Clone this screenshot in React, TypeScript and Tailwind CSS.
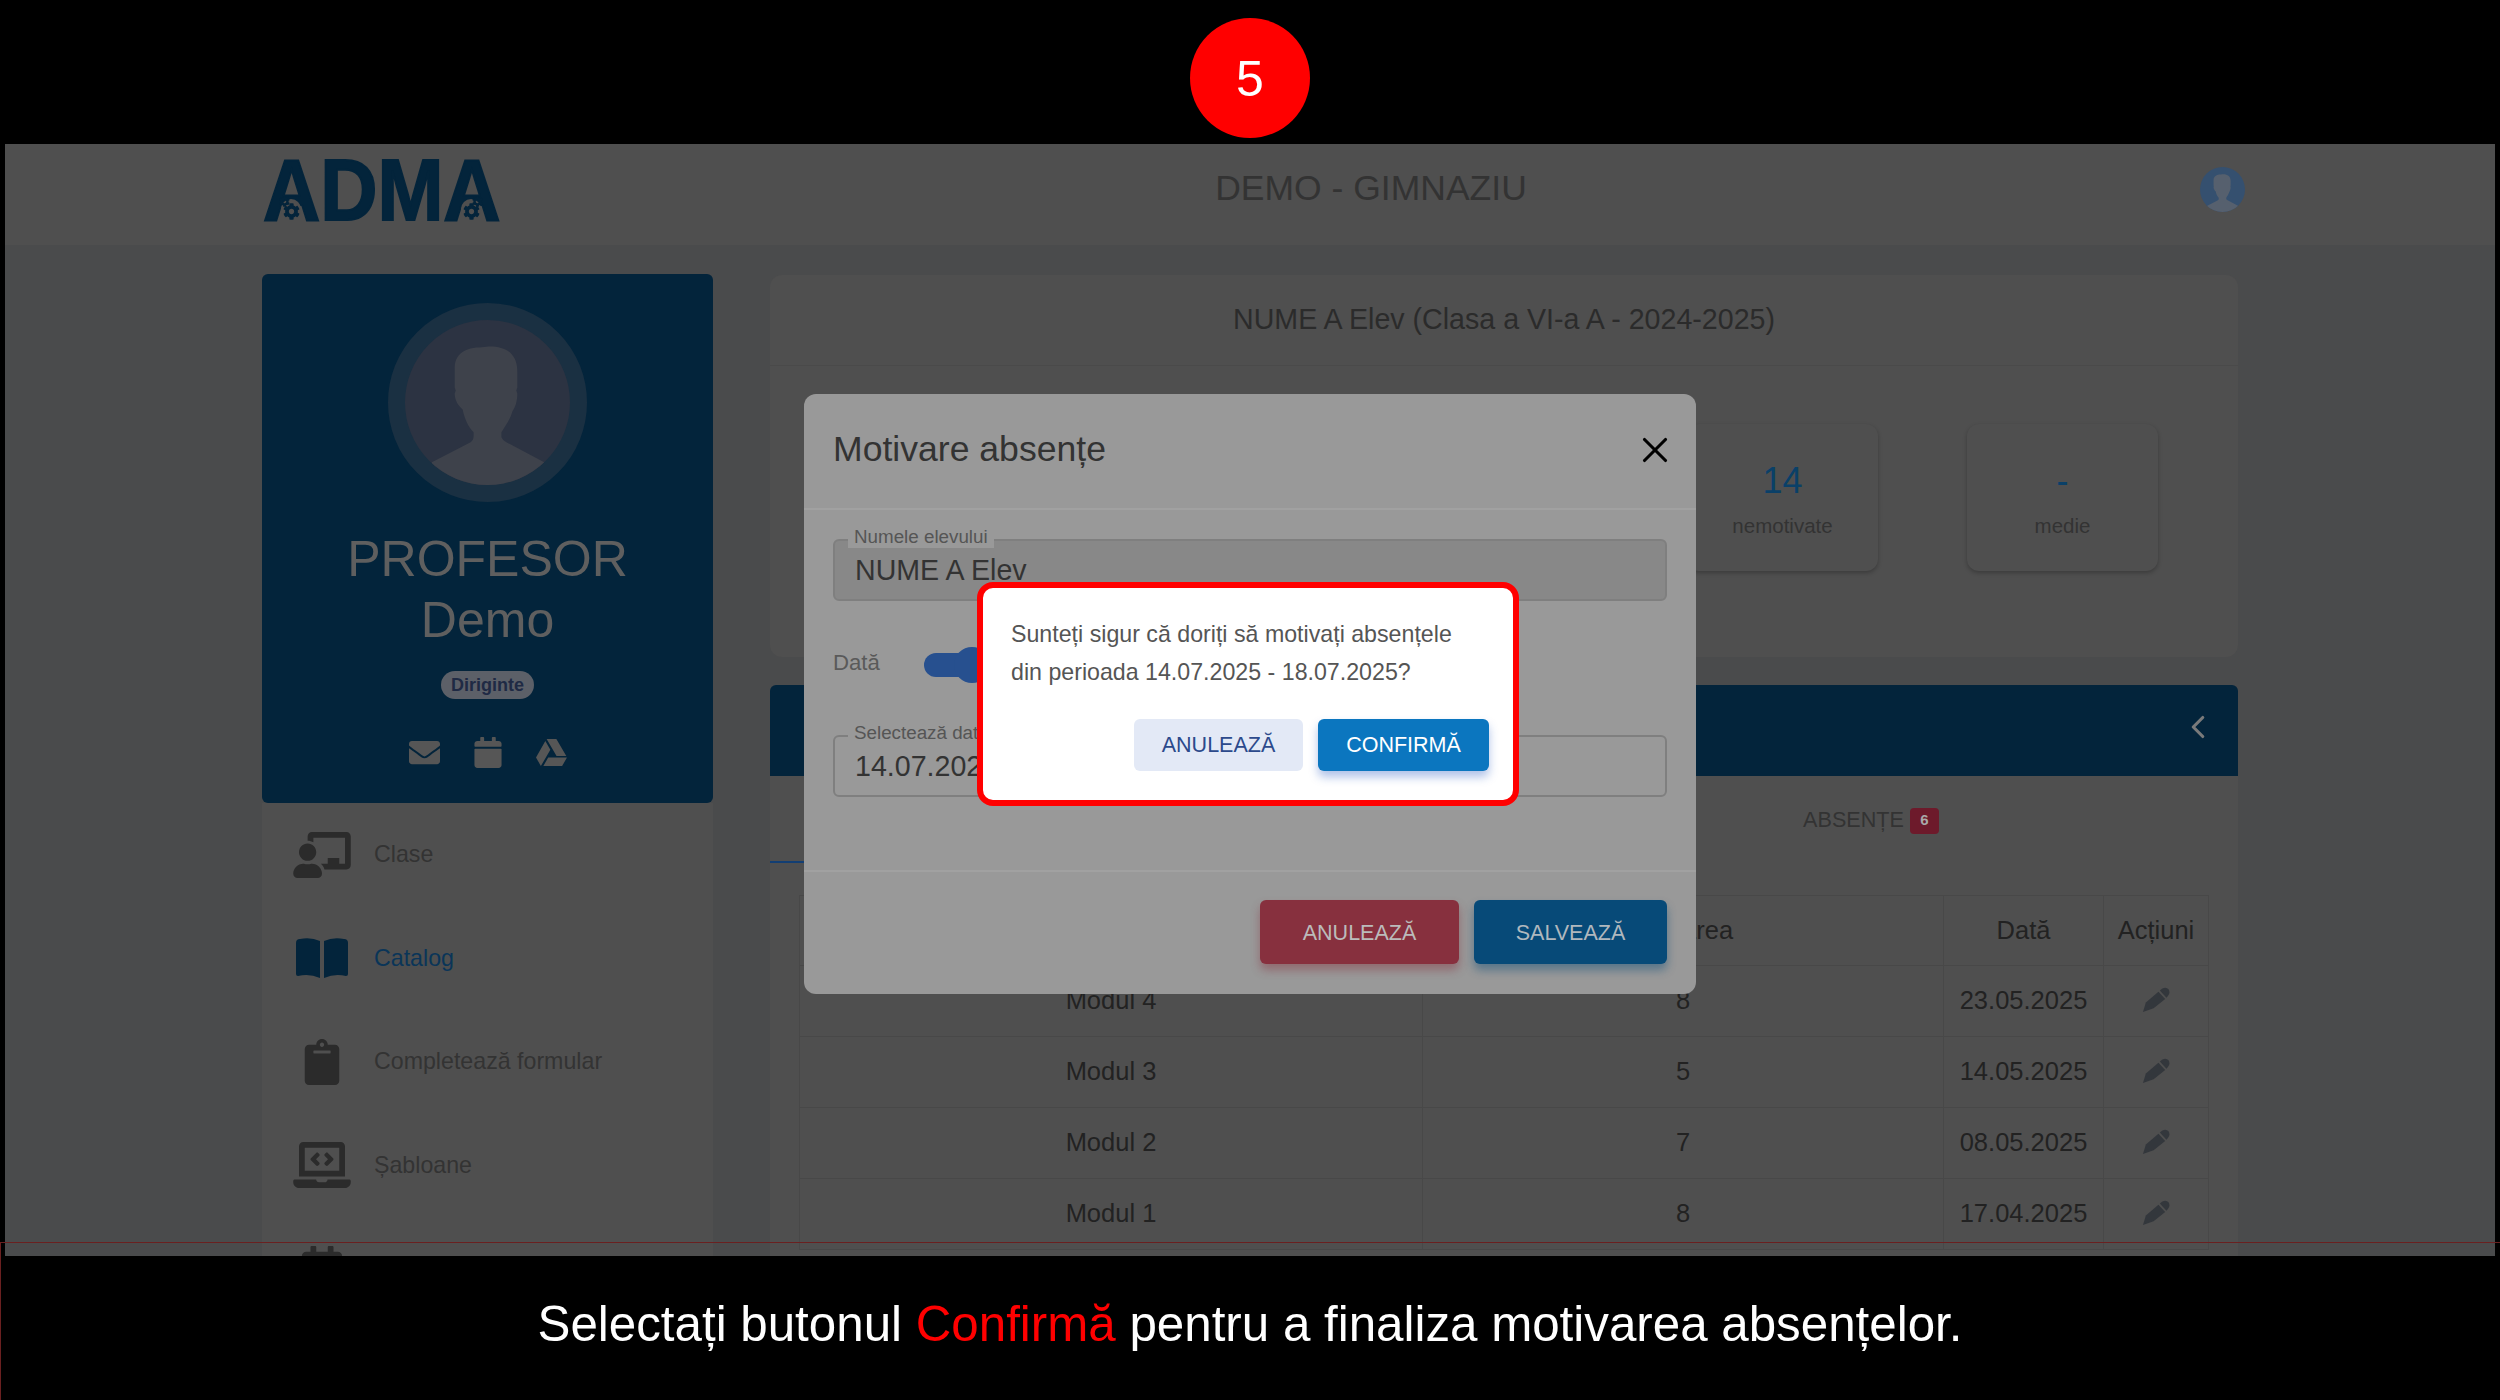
import {
  FaCalendar,
  FaChalkboardTeacher,
  FaClipboard,
  FaCog,
  FaEnvelope,
  FaGoogleDrive,
  FaLaptopCode,
} from "react-icons/fa";
import { ChevronLeft, X } from "lucide-react";

function BookIcon({ className }: { className?: string }) {
  return (
    <svg viewBox="0 0 52 40" fill="currentColor" className={className}>
      <path d="M0 5Q0 1 4 1Q15 -1 24 3V40Q13 35 2 38Q0 38 0 36Z" />
      <path d="M52 5Q52 1 48 1Q37 -1 28 3V40Q39 35 50 38Q52 38 52 36Z" />
    </svg>
  );
}

function PencilIcon() {
  return (
    <svg viewBox="0 0 30 26" fill="#33373c" className="w-[29px] h-[26px] mx-auto">
      <path d="M1 25.5L4 15.5L17 4.5L24 12L12 21.5Z" />
      <path d="M18.5 3.3L21 1.2Q25 -0.8 27.5 2Q29.5 5.5 27 8.6L25.3 10.6Z" />
    </svg>
  );
}

const navItems = [
  { label: "Clase", icon: FaChalkboardTeacher, active: false, size: "w-[58px] h-[46px]" },
  { label: "Catalog", icon: BookIcon, active: true, size: "w-[52px] h-[40px]" },
  { label: "Completează formular", icon: FaClipboard, active: false, size: "w-[58px] h-[46px]" },
  { label: "Șabloane", icon: FaLaptopCode, active: false, size: "w-[58px] h-[46px]" },
  { label: "", icon: FaCalendar, active: false, size: "w-[58px] h-[46px]" },
];

const rows = [
  { title: "Modul 4", value: "8", date: "23.05.2025" },
  { title: "Modul 3", value: "5", date: "14.05.2025" },
  { title: "Modul 2", value: "7", date: "08.05.2025" },
  { title: "Modul 1", value: "8", date: "17.04.2025" },
];

const stats = [
  { value: "14", label: "nemotivate" },
  { value: "-", label: "medie" },
];

function Person({ color }: { color: string }) {
  return (
    <svg viewBox="0 0 166 166" className="w-full h-full block">
      <path
        fill={color}
        d="M82 27C90 26 100 28 106 33C111 38 113 44 113 52L113 68L112 71L113 74C113 82 111 88 108 92C106 100 100 108 97 113L97 118Q98 121 102 123L140 143L140 166L27 166L27 143L66 123Q69 121 69 117L69 113C64 108 60 100 58 90C53 86 50 80 50 74L51 71L50 68L50 48C50 40 54 34 60 31C68 27 76 28 82 27Z"
      />
    </svg>
  );
}

function LogoGears({ className, flip }: { className: string; flip?: boolean }) {
  return (
    <div className={`absolute w-[24px] h-[22px] ${className}`}>
      <div className="absolute left-[2px] top-0 w-[20px] h-[20px] rounded-full bg-[#4f4f4f]" />
      <FaCog
        className={`absolute top-[-3px] w-[11px] h-[11px] text-[#03243b] ${flip ? "right-[0px]" : "left-[0px]"}`}
      />
      <FaCog className="absolute left-[4px] top-[4px] w-[17px] h-[17px] text-[#03243b]" />
    </div>
  );
}

function Logo() {
  return (
    <div className="relative w-[237px] h-[63px] -ml-[1px]">
      <span className="absolute left-0 top-0 origin-left scale-x-[0.9] text-[88px] leading-[63px] font-bold text-[#03243b] [-webkit-text-stroke:2px_#03243b]">
        ADMA
      </span>
      <LogoGears className="left-[16px] top-[41px]" />
      <LogoGears className="left-[196px] top-[41px]" flip />
    </div>
  );
}

function Sidebar() {
  return (
    <aside className="w-[451px] shrink-0">
      <div className="h-[529px] rounded-md bg-[#03243b] flex flex-col items-center pt-[29px]">
        <div className="w-[199px] h-[199px] rounded-full border-[17px] border-[#1a3042] bg-[#2c3342] overflow-hidden">
          <Person color="#3e424b" />
        </div>
        <div className="mt-[27px] text-[50px] leading-[61px] text-[#5f5f5f]">
          PROFESOR
        </div>
        <div className="text-[50px] leading-[61px] text-[#5f5f5f]">Demo</div>
        <div className="mt-[20px] h-[28px] w-[93px] rounded-full bg-[#5c6068] text-[18px] font-bold text-[#1f2a44] flex items-center justify-center">
          Diriginte
        </div>
        <div className="mt-[38px] flex items-center gap-[34px] text-[#565656]">
          <FaEnvelope className="w-[31px] h-[31px]" />
          <FaCalendar className="w-[28px] h-[31px]" />
          <FaGoogleDrive className="w-[31px] h-[31px]" />
        </div>
      </div>
      <nav className="bg-[#4f4f4f] h-[500px]">
        {navItems.map(({ label, icon: Icon, active, size }) => (
          <div key={size + label} className="h-[103.5px] flex items-center">
            <div className="w-[112px] flex justify-center pl-[7px]">
              <Icon
                className={`${size} ${active ? "text-[#03243b]" : "text-[#2b2b2b]"}`}
              />
            </div>
            <span
              className={`text-[23.2px] ${active ? "text-[#0a3558]" : "text-[#333333]"}`}
            >
              {label}
            </span>
          </div>
        ))}
      </nav>
    </aside>
  );
}

function MainPanel() {
  return (
    <main className="w-[1468px] ml-[57px] shrink-0 pt-[1px]">
      <section className="h-[382px] rounded-xl bg-[#4f4f4f]">
        <div className="h-[91px] pb-[2px] flex items-center justify-center border-b border-[#4a4a4a] text-[28.6px] text-[#2b2b2b]">
          NUME A Elev (Clasa a VI-a A - 2024-2025)
        </div>
        <div className="mt-[58px] pr-[80px] flex justify-end gap-[89px]">
          {stats.map((s) => (
            <div
              key={s.label}
              className="w-[191px] h-[147px] rounded-xl bg-[#4f4f4f] shadow-[0_2px_4px_rgba(0,0,0,0.25)] flex flex-col items-center pt-[36px]"
            >
              <div className="text-[36px] leading-[42px] text-[#0a4068]">
                {s.value}
              </div>
              <div className="mt-[12px] text-[20.5px] leading-[24px] text-[#333333]">
                {s.label}
              </div>
            </div>
          ))}
        </div>
      </section>

      <div className="mt-[28px] h-[91px] rounded-t-md bg-[#03243b] flex items-center justify-end pr-[21px] pb-[7px]">
        <ChevronLeft className="w-[38px] h-[38px] text-[#7a7a7a]" strokeWidth={2} />
      </div>

      <section className="bg-[#4f4f4f] h-[500px] px-[29px]">
        <div className="-mx-[29px] grid grid-cols-2 h-[87px]">
          <div className="border-b-2 border-[#123e73]" />
          <div className="flex items-center justify-center gap-[6px] pt-[2px] text-[21.6px] text-[#333333]">
            ABSENȚE
            <span className="w-[29px] h-[26px] rounded bg-[#6d1a2b] text-[15px] font-bold text-[#a9a9a9] flex items-center justify-center">
              6
            </span>
          </div>
        </div>
        <table className="mt-[32px] w-[1410px] table-fixed border-collapse border border-[#484848] text-[25.5px] text-[#222222] text-center">
          <thead>
            <tr className="h-[70px]">
              <th className="w-[623px] border border-[#484848] font-normal" />
              <th className="w-[521px] border border-[#484848] font-normal">Valoarea</th>
              <th className="w-[160px] border border-[#484848] font-normal">Dată</th>
              <th className="border border-[#484848] font-normal">Acțiuni</th>
            </tr>
          </thead>
          <tbody>
            {rows.map((r) => (
              <tr key={r.title} className="h-[71px]">
                <td className="border border-[#484848] pb-[2px]">{r.title}</td>
                <td className="border border-[#484848] pb-[2px]">{r.value}</td>
                <td className="border border-[#484848] pb-[2px]">{r.date}</td>
                <td className="border border-[#484848] pb-[2px]">
                  <PencilIcon />
                </td>
              </tr>
            ))}
          </tbody>
        </table>
      </section>
    </main>
  );
}

function OutlinedField({
  label,
  value,
  filled,
}: {
  label: string;
  value: string;
  filled?: boolean;
}) {
  return (
    <div
      className={`relative h-[62px] rounded-md border-2 border-[#7f7f7f] flex items-center px-[20px] text-[28.6px] text-[#333333] ${filled ? "bg-[#888888]" : ""}`}
    >
      <span className="absolute left-[13px] top-[-15px] px-[6px] bg-[#999999] text-[18.8px] leading-[22px] text-[#555555]">
        {label}
      </span>
      {value}
    </div>
  );
}

function MotivareModal() {
  return (
    <div className="absolute left-[799px] top-[250px] w-[892px] h-[600px] rounded-xl bg-[#999999] flex flex-col">
      <div className="h-[116px] shrink-0 border-b-2 border-[#a1a1a1] flex items-center justify-between pl-[29px] pr-[20px] pb-[3px]">
        <h2 className="text-[35.6px] text-[#333333]">Motivare absențe</h2>
        <X className="w-[42px] h-[42px] text-black" strokeWidth={1.8} />
      </div>
      <div className="h-[362px] shrink-0 border-b-2 border-[#a1a1a1] px-[29px] pt-[29px]">
        <OutlinedField label="Numele elevului" value="NUME A Elev" filled />
        <div className="mt-[46px] h-[36px] flex items-center">
          <span className="w-[91px] pb-[4px] text-[22.2px] text-[#5a5a5a]">Dată</span>
          <div className="relative w-[60px] h-[24px] rounded-full bg-[#27508f]">
            <div className="absolute left-[30px] top-[-6px] w-[36px] h-[36px] rounded-full bg-[#27508f]" />
          </div>
        </div>
        <div className="mt-[52px]">
          <OutlinedField label="Selectează data" value="14.07.2025 - 18.07.2025" />
        </div>
      </div>
      <div className="flex-1 flex justify-end gap-[15px] pr-[29px] pt-[28px]">
        <button className="w-[199px] h-[64px] pt-[2px] rounded-md bg-[#87303e] text-[21.5px] text-[#bbbbbb] shadow-[0_6px_10px_rgba(135,48,62,0.45)]">
          ANULEAZĂ
        </button>
        <button className="w-[193px] h-[64px] pt-[2px] rounded-md bg-[#074a78] text-[21.5px] text-[#b0b8be] shadow-[0_6px_10px_rgba(7,74,120,0.45)]">
          SALVEAZĂ
        </button>
      </div>
    </div>
  );
}

function ConfirmDialog() {
  return (
    <div className="absolute left-[972px] top-[438px] w-[542px] h-[224px] rounded-[16px] border-[6px] border-[#ff0000] bg-white px-[28px] pt-[27px]">
      <p className="text-[23.2px] leading-[38px] text-[#555555]">
        Sunteți sigur că doriți să motivați absențele
        <br />
        din perioada 14.07.2025 - 18.07.2025?
      </p>
      <div className="mt-[28px] -mr-[4px] flex justify-end gap-[15px]">
        <button className="w-[169px] h-[52px] rounded-md bg-[#e3e9f6] text-[21.5px] text-[#2c4a8c]">
          ANULEAZĂ
        </button>
        <button className="w-[171px] h-[52px] rounded-md bg-[#0b76bf] text-[21.5px] text-white shadow-[0_6px_10px_rgba(30,80,190,0.35)]">
          CONFIRMĂ
        </button>
      </div>
    </div>
  );
}

export default function App() {
  return (
    <div className="relative h-[1400px] bg-black flex flex-col overflow-hidden font-['Liberation_Sans',Arial,sans-serif]">
      <div className="h-[144px] shrink-0 flex justify-center pt-[18px]">
        <div className="w-[120px] h-[120px] pt-[2px] rounded-full bg-[#ff0000] text-white text-[50px] flex items-center justify-center">
          5
        </div>
      </div>

      <div className="relative mx-[5px] h-[1112px] shrink-0 overflow-hidden bg-[#4a4b4c]">
        <header className="h-[101px] bg-[#4f4f4f] flex items-center pl-[259px] pr-[250px] pb-[11px]">
          <Logo />
          <div className="flex-1 pl-[42px] text-center text-[35.5px] text-[#333333]">
            DEMO - GIMNAZIU
          </div>
          <div className="w-[45px] h-[45px] rounded-full bg-[#35506f] overflow-hidden">
            <Person color="#56606e" />
          </div>
        </header>
        <div className="flex pl-[257px] pt-[29px]">
          <Sidebar />
          <MainPanel />
        </div>
        <MotivareModal />
        <ConfirmDialog />
      </div>

      <div className="flex-1 flex items-center justify-center pb-[8px] text-[49.3px] text-white">
        <span>
          Selectați butonul <span className="text-[#ff0000]">Confirmă</span>{" "}
          pentru a finaliza motivarea absențelor.
        </span>
      </div>

      {/* thin marker frame from the source video */}
      <div className="absolute left-0 right-0 top-[1242px] h-px bg-[#6a2020]" />
      <div className="absolute left-0 top-[1242px] bottom-0 w-px bg-[#6a2020]" />
    </div>
  );
}
